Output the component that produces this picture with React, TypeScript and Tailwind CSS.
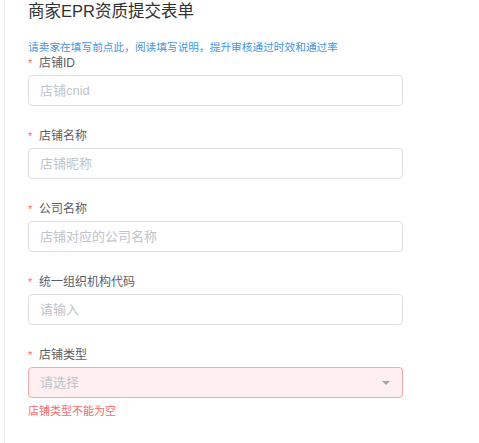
const fields = [
  { label: '店铺ID', placeholder: '店铺cnid' },
  { label: '店铺名称', placeholder: '店铺昵称' },
  { label: '公司名称', placeholder: '店铺对应的公司名称' },
  { label: '统一组织机构代码', placeholder: '请输入' },
];

function Label({ text }: { text: string }) {
  return (
    <div className="flex items-center h-4 leading-4 text-[12px] text-[#5a5e66]">
      <span className="text-[#f56c6c] w-[11px] text-[11px]">*</span>
      <span>{text}</span>
    </div>
  );
}

export default function App() {
  return (
    <div
      className="w-[479px] h-[443px] bg-white pl-1 overflow-hidden"
      style={{ fontFamily: '"Liberation Sans", "Noto Sans CJK SC", sans-serif' }}
    >
      <div className="h-full border-l border-[#ebeef5] pl-[23px]">
        {/* Title */}
        <h1 className="h-[22px] leading-[22px] text-[16.5px] text-[#303133]">商家EPR资质提交表单</h1>

        {/* Hint */}
        <p className="mt-[18px] h-[15px] leading-[15px] text-[10.7px] text-[#4596e6] cursor-pointer whitespace-nowrap">
          请卖家在填写前点此，阅读填写说明，提升审核通过时效和通过率
        </p>

        {/* Fields */}
        {fields.map((f) => (
          <div key={f.label} className="mb-[22px]">
            <Label text={f.label} />
            <input
              className="mt-1 w-[375px] h-[31px] rounded border border-[#dcdfe6] px-[11px] text-[13px] text-[#606266] placeholder:text-[#c0c4cc] outline-none"
              placeholder={f.placeholder}
            />
          </div>
        ))}

        {/* Shop type select with error */}
        <div>
          <Label text="店铺类型" />
          <div className="mt-1 w-[375px] h-[31px] rounded border border-[#f8a9a9] bg-[#fef0f0] px-[11px] flex items-center justify-between">
            <span className="text-[13px] text-[#c0c4cc]">请选择</span>
            <span className="w-0 h-0 border-l-[4px] border-r-[4px] border-t-[4px] border-l-transparent border-r-transparent border-t-[#a0a3aa] mr-[1px]" />
          </div>
          <p className="mt-[6px] leading-[15px] text-[11px] text-[#f56c6c]">店铺类型不能为空</p>
        </div>
      </div>
    </div>
  );
}
